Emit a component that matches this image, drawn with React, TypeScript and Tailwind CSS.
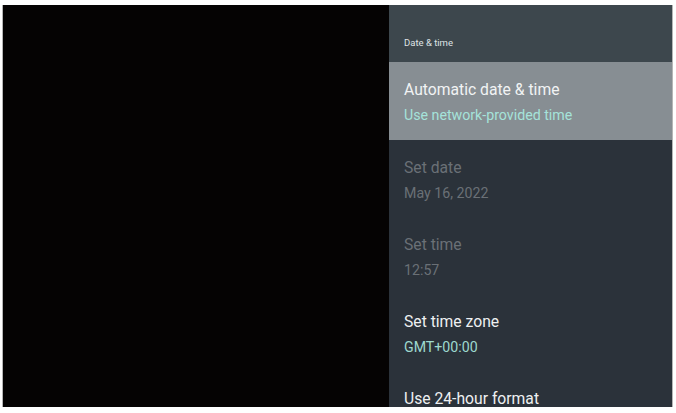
import React from "react";

const Item = ({ title, sub, titleCls, subCls, h = "h-[77px]", bg = "" }: { title: string; sub?: string; titleCls: string; subCls: string; h?: string; bg?: string }) => (
  <div className={`${h} ${bg} flex flex-col pl-[15px] pt-[18px] shrink-0`}>
    <div className={`text-[15.7px] leading-[20px] ${titleCls}`}>{title}</div>
    {sub && <div className={`text-[14.2px] leading-[18px] mt-[6px] ${subCls}`}>{sub}</div>}
  </div>
);

export default function App() {
  return (
    <div className="w-[676px] h-[413px] bg-white pt-[5px] pl-[2px]" style={{ fontFamily: "Roboto, 'Noto Sans', sans-serif" }}>
      <div className="w-[671px] h-[402px] flex overflow-hidden border-l border-r border-[#b5b5b5]">
        <div className="w-[386px] bg-[#050303] shrink-0" />
        <div className="flex-1 bg-[#2b323a] flex flex-col overflow-hidden">
          <div className="h-[57px] bg-[#3d474d] shrink-0 flex items-end pl-[15px] pb-[12px]">
            <span className="text-[9.5px] text-[#dfe3e5]">Date &amp; time</span>
          </div>
          <Item title="Automatic date & time" sub="Use network-provided time" titleCls="text-[#f1f3f4]" subCls="text-[#a5e3da]" h="h-[78px]" bg="bg-[#878e93]" />
          <Item title="Set date" sub="May 16, 2022" titleCls="text-[#6a7076]" subCls="text-[#6a7076]" />
          <Item title="Set time" sub="12:57" titleCls="text-[#6a7076]" subCls="text-[#6a7076]" />
          <Item title="Set time zone" sub="GMT+00:00" titleCls="text-[#eef0f1]" subCls="text-[#9ed9cf]" />
          <Item title="Use 24-hour format" titleCls="text-[#eef0f1]" subCls="" />
        </div>
      </div>
    </div>
  );
}
